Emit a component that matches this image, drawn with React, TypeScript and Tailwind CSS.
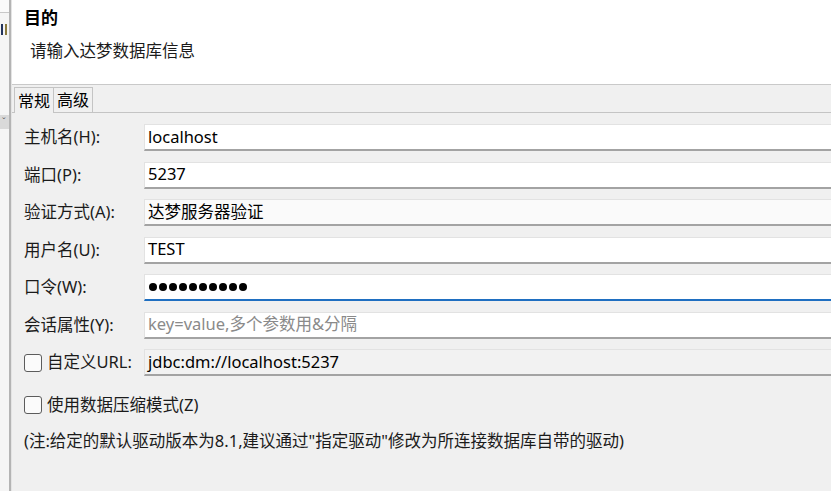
import { ReactNode } from "react";

const font = "font-['Noto_Sans','Noto_Sans_CJK_SC',sans-serif]";

const Field = ({
  label,
  children,
  className = "",
}: {
  label: ReactNode;
  children: ReactNode;
  className?: string;
}) => (
  <div className="flex items-center h-[27px]">
    <div className="w-[120px] shrink-0 text-[#1b1b1b]">{label}</div>
    <div
      className={`flex-1 h-full flex items-center pl-[3px] border border-[#e2e2e2] border-r-0 ${className}`}
    >
      {children}
    </div>
  </div>
);

const CheckBox = () => (
  <span className="w-[18px] h-[18px] shrink-0 rounded-[3px] border border-[#5c5c5c] bg-[#fbfbfb]" />
);

export default function App() {
  return (
    <div className={`w-[831px] h-[491px] overflow-hidden flex bg-[#f0f0f0] text-[16.5px] ${font}`}>
      {/* sliver of the window behind */}
      <div className="w-[9px] shrink-0 bg-[#f5f5f5] flex flex-col">
        <div className="h-[13px] border-b border-[#c8c8c8] bg-[#fafafa]" />
        <div className="mt-[11px] h-[11px] flex gap-[2px] pl-[1px]">
          <span className="w-[2px] h-full bg-[#23345c]" />
          <span className="w-[2px] h-full bg-[#8a7a40]" />
        </div>
        <div className="mt-[80px] h-[14px] bg-[#d9d9d9] text-[9px] leading-[14px] text-[#555] pl-[2px]">ˇ</div>
      </div>
      <div className="w-[3px] shrink-0 border-l-2 border-[#b4b4b4] bg-[#e4e4e4]" />

      <div className="flex-1 flex flex-col min-w-0">
        {/* header */}
        <div className="h-[85px] shrink-0 bg-white border-b border-[#c9c9c9] pl-[12px] pt-[6px]">
          <div className="font-bold text-[17px] leading-[24px] text-black">目的</div>
          <div className="pl-[6px] mt-[9px] leading-[24px] text-[#1b1b1b]">请输入达梦数据库信息</div>
        </div>

        {/* tabs */}
        <div className="h-[28px] shrink-0 flex items-end pl-[2px] border-b border-[#c4c4c4]">
          <div className="h-[26px] px-[3px] flex items-center border border-b-0 border-[#c4c4c4] bg-[#f0f0f0] text-[16px] text-black relative top-px">
            常规
          </div>
          <div className="h-[25px] px-[3px] flex items-center border border-l-0 border-b-0 border-[#c4c4c4] text-[16px] text-black">
            高级
          </div>
        </div>

        {/* form */}
        <div className="flex-1 flex flex-col pl-[12px] pt-[11px] gap-[10.5px]">
          <Field label="主机名(H):" className="bg-white border-b-2 border-b-[#a3a3a3]">
            localhost
          </Field>
          <Field label="端口(P):" className="bg-white border-b-2 border-b-[#a3a3a3]">
            5237
          </Field>
          <Field label="验证方式(A):" className="bg-[#fafafa] border-b-2 border-b-[#a3a3a3]">
            达梦服务器验证
          </Field>
          <Field label="用户名(U):" className="bg-white border-b-2 border-b-[#a3a3a3]">
            TEST
          </Field>
          <Field label="口令(W):" className="bg-white border-b-2 border-b-[#1f6fc1]">
            <span className="flex gap-[2px] pl-[1px]">
              {Array.from({ length: 10 }).map((_, i) => (
                <span key={i} className="w-[8px] h-[8px] rounded-full bg-black" />
              ))}
            </span>
          </Field>
          <Field label="会话属性(Y):" className="bg-white border-b-2 border-b-[#a3a3a3]">
            <span className="text-[#8a8a8a]">key=value,多个参数用&amp;分隔</span>
          </Field>
          <Field
            label={
              <span className="flex items-center gap-[5px]">
                <CheckBox />
                自定义URL:
              </span>
            }
            className="bg-[#f2f2f2] border-b-2 border-b-[#a3a3a3]"
          >
            jdbc:dm://localhost:5237
          </Field>

          <div className="flex items-center gap-[5px] mt-[6px] text-[#1b1b1b]">
            <CheckBox />
            使用数据压缩模式(Z)
          </div>

          <div className="mt-[1px] text-[#1b1b1b]">
            (注:给定的默认驱动版本为8.1,建议通过"指定驱动"修改为所连接数据库自带的驱动)
          </div>
        </div>
      </div>
    </div>
  );
}
